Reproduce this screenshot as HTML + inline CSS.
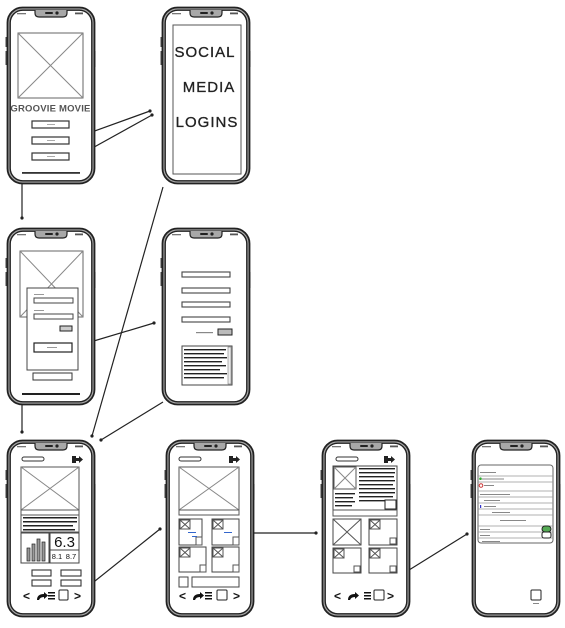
<!DOCTYPE html>
<html><head><meta charset="utf-8"><style>
html,body{margin:0;padding:0;background:#fff;width:565px;height:628px;overflow:hidden}
svg{display:block}
text{font-family:"Liberation Sans",sans-serif}
</style></head><body>
<svg width="565" height="628" viewBox="0 0 565 628" xmlns="http://www.w3.org/2000/svg">
<defs>
<g id="phone">
 <rect x="-1.5" y="30" width="2.5" height="10" fill="#444"/>
 <rect x="-1.5" y="44" width="2.5" height="14" fill="#444"/>
 <rect x="86" y="44" width="2.5" height="16" fill="#444"/>
 <rect x="0.5" y="0.5" width="87" height="176" rx="15" fill="#a8a8a8" stroke="#222" stroke-width="1.8"/>
 <rect x="3.2" y="3.2" width="81.6" height="170.6" rx="12.5" fill="#fff" stroke="#222" stroke-width="1.4"/>
 <path d="M28 3 L28 6 Q28 10 32 10 L56 10 Q60 10 60 6 L60 3" fill="#a8a8a8" stroke="#222" stroke-width="1.2"/>
 <rect x="38" y="5" width="8" height="2" rx="1" fill="#222"/>
 <circle cx="50" cy="6" r="1.6" fill="#222"/>
 <rect x="10" y="6" width="9" height="1.3" fill="#777"/>
 <rect x="68" y="5.5" width="8" height="1.8" fill="#555"/>
</g>
</defs>

<g stroke="#222" stroke-width="1.2" fill="none">
 <line x1="78" y1="137" x2="150" y2="111"/>
 <line x1="78" y1="156" x2="152" y2="115"/>
 <polyline points="32,125 22,125 22,218"/>
 <line x1="163" y1="187" x2="92" y2="436"/>
 <polyline points="60,327 22,327 22,432"/>
 <line x1="77" y1="346" x2="154" y2="323"/>
 <line x1="163" y1="402" x2="101" y2="440"/>
 <line x1="75" y1="597" x2="160" y2="529"/>
 <line x1="240" y1="533" x2="316" y2="533"/>
 <line x1="372" y1="593" x2="467" y2="534"/>
</g>
<g fill="#222">
 <circle cx="150" cy="111" r="1.6"/><circle cx="152" cy="115" r="1.6"/>
 <circle cx="22" cy="218" r="1.6"/><circle cx="92" cy="436" r="1.6"/>
 <circle cx="22" cy="432" r="1.6"/><circle cx="154" cy="323" r="1.6"/>
 <circle cx="101" cy="440" r="1.6"/><circle cx="160" cy="529" r="1.6"/>
 <circle cx="316" cy="533" r="1.6"/><circle cx="467" cy="534" r="1.6"/>
</g>

<g transform="translate(7,7)">
 <use href="#phone"/>
 <rect x="11" y="26" width="65" height="65" fill="#fff" stroke="#666"/>
 <path d="M11 26 L76 91 M76 26 L11 91" stroke="#888"/>
 <text x="43.5" y="104.5" font-size="9.5" text-anchor="middle" fill="#555" font-weight="bold" letter-spacing="0.2">GROOVIE MOVIE</text>
 <g fill="#fff" stroke="#333" stroke-width="1.2">
  <rect x="25" y="114" width="37" height="7"/><rect x="25" y="130" width="37" height="7"/><rect x="25" y="146" width="37" height="7"/>
 </g>
 <g fill="#aaa"><rect x="40" y="117" width="8" height="1"/><rect x="40" y="133" width="8" height="1"/><rect x="40" y="149" width="8" height="1"/></g>
 <rect x="15" y="165" width="58" height="1.8" fill="#333"/>
</g>

<g transform="translate(162,7)">
 <use href="#phone"/>
 <rect x="11" y="18" width="68" height="149" fill="#fff" stroke="#555"/>
 <text x="43" y="50" font-size="15" text-anchor="middle" fill="#222" letter-spacing="1" stroke="#222" stroke-width="0.3">SOCIAL</text>
 <text x="47" y="85" font-size="15" text-anchor="middle" fill="#222" letter-spacing="1" stroke="#222" stroke-width="0.3">MEDIA</text>
 <text x="45" y="120" font-size="15" text-anchor="middle" fill="#222" letter-spacing="1" stroke="#222" stroke-width="0.3">LOGINS</text>
</g>

<g transform="translate(7,228)">
 <use href="#phone"/>
 <rect x="13" y="23" width="63" height="66" fill="#fff" stroke="#666"/>
 <path d="M13 23 L76 89 M76 23 L13 89" stroke="#888"/>
 <rect x="20" y="60" width="51" height="82" fill="#fff" stroke="#444"/>
 <rect x="27" y="66" width="10" height="1" fill="#999"/>
 <rect x="27" y="70" width="39" height="5" fill="#fff" stroke="#444"/>
 <rect x="27" y="82" width="10" height="1" fill="#999"/>
 <rect x="27" y="86" width="39" height="5" fill="#fff" stroke="#444"/>
 <rect x="53" y="98" width="12" height="5" fill="#ccc" stroke="#222"/>
 <rect x="27" y="115" width="38" height="9" fill="#fff" stroke="#222" stroke-width="1.2"/>
 <rect x="40" y="119" width="10" height="1" fill="#999"/>
 <rect x="26" y="145" width="39" height="7" fill="#fff" stroke="#333"/>
 <rect x="15" y="165" width="58" height="2" fill="#222"/>
</g>

<g transform="translate(162,228)">
 <use href="#phone"/>
 <g fill="#fff" stroke="#444" stroke-width="1.1">
  <rect x="20" y="44" width="48" height="5"/><rect x="20" y="60" width="48" height="5"/>
  <rect x="20" y="74" width="48" height="5"/><rect x="20" y="89" width="48" height="5"/>
 </g>
 <rect x="34" y="104" width="17" height="1.2" fill="#888"/>
 <rect x="56" y="101" width="14" height="6" fill="#bbb" stroke="#222"/>
 <rect x="20" y="118" width="50" height="39" fill="#fff" stroke="#444"/>
 <rect x="66" y="119" width="3" height="37" fill="#eee" stroke="#666" stroke-width="0.5"/>
 <g fill="#222">
  <rect x="22" y="121" width="42" height="1.4"/><rect x="22" y="125" width="40" height="1.4"/>
  <rect x="22" y="129" width="43" height="1.4"/><rect x="22" y="133" width="38" height="1.4"/>
  <rect x="22" y="137" width="42" height="1.4"/><rect x="22" y="141" width="36" height="1.4"/>
  <rect x="22" y="145" width="43" height="1.4"/><rect x="22" y="149" width="40" height="1.4"/>
 </g>
</g>

<g transform="translate(7,440)">
 <use href="#phone"/>
 <rect x="15" y="17" width="22" height="4" rx="2" fill="#fff" stroke="#333"/>
 <path d="M65 16 h4 v2 h3 v-2 l4 3.5 l-4 3.5 v-2 h-3 v2 h-4z" fill="#222"/>
 <rect x="14" y="27" width="58" height="43" fill="#fff" stroke="#555"/>
 <path d="M14 27 L72 70 M72 27 L14 70" stroke="#888"/>
 <rect x="14" y="70" width="58" height="5" fill="#fff" stroke="#555"/>
 <rect x="14" y="75" width="58" height="17" fill="#fff" stroke="#555"/>
 <g fill="#222"><rect x="16" y="77" width="54" height="1.5"/><rect x="16" y="81" width="54" height="1.5"/><rect x="16" y="85" width="50" height="1.5"/><rect x="16" y="89" width="52" height="1.5"/></g>
 <rect x="14" y="93" width="28" height="30" fill="#fff" stroke="#444"/>
 <g fill="#999" stroke="#222" stroke-width="0.7"><rect x="20" y="108" width="3" height="13"/><rect x="25" y="104" width="3" height="17"/><rect x="30" y="99" width="3" height="22"/><rect x="35" y="102" width="3" height="19"/></g>
 <rect x="43" y="93" width="29" height="30" fill="#fff" stroke="#444"/>
 <line x1="43" y1="110" x2="72" y2="110" stroke="#444"/>
 <text x="57.5" y="107" font-size="15" text-anchor="middle" fill="#111">6.3</text>
 <text x="50" y="119" font-size="7.5" text-anchor="middle" fill="#111">8.1</text>
 <text x="64" y="119" font-size="7.5" text-anchor="middle" fill="#111">8.7</text>
 <g fill="#fff" stroke="#333" stroke-width="1.1"><rect x="25" y="130" width="19" height="6"/><rect x="54" y="130" width="20" height="6"/><rect x="25" y="140" width="19" height="6"/><rect x="54" y="140" width="20" height="6"/></g>
 <g fill="#111">
  <text x="16" y="160" font-size="12" font-weight="bold">&lt;</text>
  <path d="M30 160 q0 -6 7 -6 v-2 l4 3.5 l-4 3.5 v-2 q-4 0 -5 3z"/>
  <rect x="41" y="152" width="7" height="1.5"/><rect x="41" y="155" width="7" height="1.5"/><rect x="41" y="158" width="7" height="1.5"/>
  <text x="67" y="160" font-size="12" font-weight="bold">&gt;</text>
 </g>
 <rect x="52" y="150" width="9" height="10" rx="1" fill="#fff" stroke="#222"/>
</g>

<g transform="translate(166,440)">
 <use href="#phone"/>
 <rect x="13" y="17" width="22" height="4" rx="2" fill="#fff" stroke="#333"/>
 <path d="M63 16 h4 v2 h3 v-2 l4 3.5 l-4 3.5 v-2 h-3 v2 h-4z" fill="#222"/>
 <rect x="13" y="27" width="60" height="43" fill="#fff" stroke="#555"/>
 <path d="M13 27 L73 70 M73 27 L13 70" stroke="#888"/>
 <rect x="13" y="70" width="60" height="5" fill="#fff" stroke="#555"/>
 <g fill="#fff" stroke="#444">
  <rect x="13" y="79" width="23" height="26"/><rect x="46" y="79" width="27" height="26"/>
  <rect x="13" y="107" width="27" height="25"/><rect x="46" y="107" width="27" height="25"/>
  <rect x="13" y="137" width="9" height="10"/><rect x="26" y="137" width="47" height="10"/>
 </g>
 <g stroke="#555" fill="none">
  <rect x="14" y="80" width="10" height="9"/><path d="M14 80 L24 89 M24 80 L14 89"/>
  <rect x="47" y="80" width="10" height="9"/><path d="M47 80 L57 89 M57 80 L47 89"/>
  <rect x="14" y="108" width="10" height="9"/><path d="M14 108 L24 117 M24 108 L14 117"/>
  <rect x="47" y="108" width="10" height="9"/><path d="M47 108 L57 117 M57 108 L47 117"/>
  <rect x="30" y="97" width="6" height="8"/><rect x="67" y="97" width="6" height="8"/>
  <rect x="34" y="125" width="6" height="7"/><rect x="67" y="125" width="6" height="7"/>
 </g>
 <g fill="#36c"><rect x="22" y="92" width="8" height="1"/><rect x="58" y="92" width="8" height="1"/><rect x="26" y="96" width="5" height="1"/></g>
 <g fill="#111">
  <text x="13" y="160" font-size="12" font-weight="bold">&lt;</text>
  <path d="M27 160 q0 -6 7 -6 v-2 l4 3.5 l-4 3.5 v-2 q-4 0 -5 3z"/>
  <rect x="39" y="152" width="7" height="1.5"/><rect x="39" y="155" width="7" height="1.5"/><rect x="39" y="158" width="7" height="1.5"/>
  <text x="67" y="160" font-size="12" font-weight="bold">&gt;</text>
 </g>
 <rect x="51" y="150" width="10" height="10" rx="1" fill="#fff" stroke="#222"/>
</g>

<g transform="translate(322,440)">
 <use href="#phone"/>
 <rect x="14" y="17" width="22" height="4" rx="2" fill="#fff" stroke="#333"/>
 <path d="M62 16 h4 v2 h3 v-2 l4 3.5 l-4 3.5 v-2 h-3 v2 h-4z" fill="#222"/>
 <rect x="11" y="26" width="64" height="50" fill="#fff" stroke="#444"/>
 <rect x="12" y="27" width="22" height="22" fill="#fff" stroke="#555"/>
 <path d="M12 27 L34 49 M34 27 L12 49" stroke="#888"/>
 <g fill="#222">
  <rect x="37" y="28" width="36" height="1.4"/><rect x="37" y="32" width="36" height="1.4"/><rect x="37" y="36" width="35" height="1.4"/>
  <rect x="37" y="40" width="36" height="1.4"/><rect x="37" y="44" width="34" height="1.4"/><rect x="37" y="48" width="36" height="1.4"/>
  <rect x="37" y="52" width="36" height="1.4"/><rect x="37" y="56" width="34" height="1.4"/><rect x="37" y="60" width="28" height="1.4"/>
  <rect x="13" y="53" width="20" height="1.4"/><rect x="13" y="57" width="18" height="1.4"/><rect x="13" y="61" width="20" height="1.4"/><rect x="13" y="65" width="17" height="1.4"/>
 </g>
 <rect x="63" y="60" width="11" height="9" fill="#fff" stroke="#222"/>
 <rect x="11" y="70" width="64" height="6" fill="#fff" stroke="#555"/>
 <g fill="#fff" stroke="#444">
  <rect x="11" y="79" width="28" height="26"/><rect x="47" y="79" width="28" height="26"/>
  <rect x="11" y="108" width="28" height="25"/><rect x="47" y="108" width="28" height="25"/>
 </g>
 <g stroke="#555" fill="none">
  <path d="M11 79 L39 105 M39 79 L11 105"/>
  <rect x="48" y="80" width="10" height="9"/><path d="M48 80 L58 89 M58 80 L48 89"/>
  <rect x="12" y="109" width="10" height="9"/><path d="M12 109 L22 118 M22 109 L12 118"/>
  <rect x="48" y="109" width="10" height="9"/><path d="M48 109 L58 118 M58 109 L48 118"/>
  <rect x="68" y="98" width="6" height="6"/><rect x="32" y="126" width="6" height="6"/><rect x="68" y="126" width="6" height="6"/>
 </g>
 <g fill="#111">
  <text x="12" y="160" font-size="12" font-weight="bold">&lt;</text>
  <path d="M26 160 q0 -6 7 -6 v-2 l4 3.5 l-4 3.5 v-2 q-4 0 -5 3z"/>
  <rect x="42" y="152" width="7" height="1.5"/><rect x="42" y="155" width="7" height="1.5"/><rect x="42" y="158" width="7" height="1.5"/>
  <text x="65" y="160" font-size="12" font-weight="bold">&gt;</text>
 </g>
 <rect x="52" y="150" width="10" height="10" rx="1" fill="#fff" stroke="#222"/>
</g>

<g transform="translate(472,440)">
 <use href="#phone"/>
 <rect x="6" y="25" width="75" height="78" rx="3" fill="#fff" stroke="#666"/>
 <g stroke="#999" stroke-width="0.7">
  <line x1="6" y1="36" x2="81" y2="36"/><line x1="6" y1="42" x2="81" y2="42"/><line x1="6" y1="51" x2="81" y2="51"/>
  <line x1="6" y1="57" x2="81" y2="57"/><line x1="6" y1="63" x2="81" y2="63"/><line x1="6" y1="69" x2="81" y2="69"/>
  <line x1="6" y1="75" x2="81" y2="75"/><line x1="6" y1="86" x2="81" y2="86"/><line x1="6" y1="92" x2="81" y2="92"/><line x1="6" y1="98" x2="81" y2="98"/>
 </g>
 <g fill="#888">
  <rect x="8" y="32" width="16" height="1"/><rect x="10" y="38.5" width="22" height="1"/><rect x="12" y="45" width="10" height="1"/>
  <rect x="8" y="54" width="30" height="1"/><rect x="12" y="60" width="16" height="1"/><rect x="12" y="66" width="12" height="1"/>
  <rect x="20" y="72" width="18" height="1"/><rect x="28" y="80" width="26" height="1"/><rect x="8" y="89" width="10" height="1"/>
  <rect x="8" y="95" width="10" height="1"/><rect x="10" y="101" width="18" height="1"/>
 </g>
 <circle cx="8.5" cy="38.7" r="1.3" fill="#3a3"/>
 <circle cx="9" cy="45.5" r="1.8" fill="none" stroke="#c33"/>
 <rect x="8" y="65" width="1.2" height="3" fill="#33c"/>
 <rect x="70" y="86" width="9" height="6" rx="3" fill="#5a5" stroke="#222"/>
 <rect x="70" y="92" width="9" height="6" rx="2" fill="#fff" stroke="#222"/>
 <rect x="59" y="150" width="10" height="10" rx="1" fill="#fff" stroke="#222"/>
 <rect x="61" y="163" width="6" height="1" fill="#888"/>
</g>
</svg>
</body></html>
